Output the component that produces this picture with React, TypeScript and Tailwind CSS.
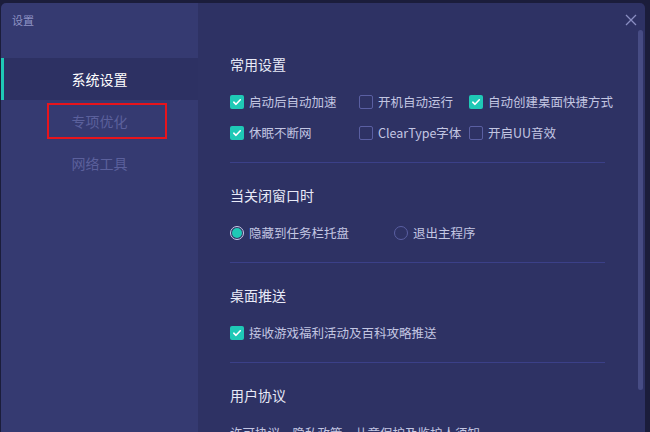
import { useState } from "react";

const font = { fontFamily: '"Noto Sans CJK SC", "Noto Sans", sans-serif' };

function Check({ checked, label }: { checked: boolean; label: string }) {
  return (
    <label className="flex items-center h-5 text-[12.5px] text-[#c3c6e2] whitespace-nowrap">
      {checked ? (
        <span className="w-[14px] h-[14px] shrink-0 rounded-[2px] bg-[#1fc9b6] flex items-center justify-center">
          <svg width="10" height="10" viewBox="0 0 10 10">
            <path d="M1.8 5.2 L4 7.3 L8.3 2.8" fill="none" stroke="#ffffff" strokeWidth="1.6" strokeLinecap="round" strokeLinejoin="round" />
          </svg>
        </span>
      ) : (
        <span className="w-[14px] h-[14px] shrink-0 rounded-[2px] border border-[#5a5fa2]" />
      )}
      <span className="ml-[5px]">{label}</span>
    </label>
  );
}

function Radio({ checked, label }: { checked: boolean; label: string }) {
  return (
    <label className="flex items-center h-5 text-[12.5px] text-[#c3c6e2] whitespace-nowrap">
      {checked ? (
        <span className="w-[14px] h-[14px] shrink-0 rounded-full border border-[#c9ccea] flex items-center justify-center">
          <span className="w-[10px] h-[10px] rounded-full bg-[#1fc9b6]" />
        </span>
      ) : (
        <span className="w-[14px] h-[14px] shrink-0 rounded-full border border-[#5a5fa2]" />
      )}
      <span className="ml-[5px]">{label}</span>
    </label>
  );
}

function Section({ title, children, last }: { title: string; children?: React.ReactNode; last?: boolean }) {
  return (
    <div className={last ? "pt-[22px]" : "pt-[22px] pb-[19px] border-b border-[#3b4088]"}>
      <h2 className="h-5 leading-5 text-[14px] text-[#e8eaf7]">{title}</h2>
      {children && <div className="mt-[18px]">{children}</div>}
    </div>
  );
}

const navItems = ["系统设置", "专项优化", "网络工具"];

export default function App() {
  const [active] = useState(0);

  return (
    <div className="w-[650px] h-[432px] bg-[#1b1d3b] overflow-hidden" style={font}>
      <div className="ml-[1px] mt-[3px] w-[644px] h-[440px] rounded-[5px] overflow-hidden flex">
        {/* ===== SIDEBAR ===== */}
        <div className="w-[197px] bg-[#353a71] shrink-0">
          <div className="h-[55px] pl-[11px] pt-[9px] text-[11px] text-[#8e92c4]">设置</div>
          {navItems.map((item, i) => (
            <div
              key={item}
              className={
                i === active
                  ? "relative h-[42px] flex items-center justify-center text-[14px] text-white bg-[#2d3163]"
                  : "relative h-[42px] flex items-center justify-center text-[14px] text-[#5b609c]"
              }
            >
              {i === active && <span className="absolute left-0 top-0 bottom-0 w-[3px] bg-[#1fc9b6]" />}
              {i === 1 && (
                <span className="absolute left-[46px] top-[3px] w-[120px] h-[36px] border-2 border-[#e8141c]" />
              )}
              {item}
            </div>
          ))}
        </div>

        {/* ===== CONTENT ===== */}
        <div className="relative flex-1 min-w-0 bg-[#2e3264]">
          <button className="absolute right-[8px] top-[11px] w-[12px] h-[12px]">
            <svg width="12" height="12" viewBox="0 0 12 12">
              <path d="M1 1 L11 11 M11 1 L1 11" stroke="#8a8ec2" strokeWidth="1.3" />
            </svg>
          </button>
          <div className="absolute right-[2px] top-[27px] w-[5px] h-[360px] rounded-full bg-[#474c84]" />

          <div className="pl-[32px] pr-[40px] pt-[29px]">
            <Section title="常用设置">
              <div className="grid grid-cols-[129px_110px_1fr] gap-y-[11px]">
                <Check checked label="启动后自动加速" />
                <Check checked={false} label="开机自动运行" />
                <Check checked label="自动创建桌面快捷方式" />
                <Check checked label="休眠不断网" />
                <Check checked={false} label="ClearType字体" />
                <Check checked={false} label="开启UU音效" />
              </div>
            </Section>

            <Section title="当关闭窗口时">
              <div className="grid grid-cols-[164px_1fr]">
                <Radio checked label="隐藏到任务栏托盘" />
                <Radio checked={false} label="退出主程序" />
              </div>
            </Section>

            <Section title="桌面推送">
              <Check checked label="接收游戏福利活动及百科攻略推送" />
            </Section>

            <Section title="用户协议" last>
              <div className="mt-[17px] h-5 leading-5 text-[12.5px] text-[#c3c6e2]">
                许可协议、隐私政策、儿童保护及监护人须知
              </div>
            </Section>
          </div>
        </div>
      </div>
    </div>
  );
}
